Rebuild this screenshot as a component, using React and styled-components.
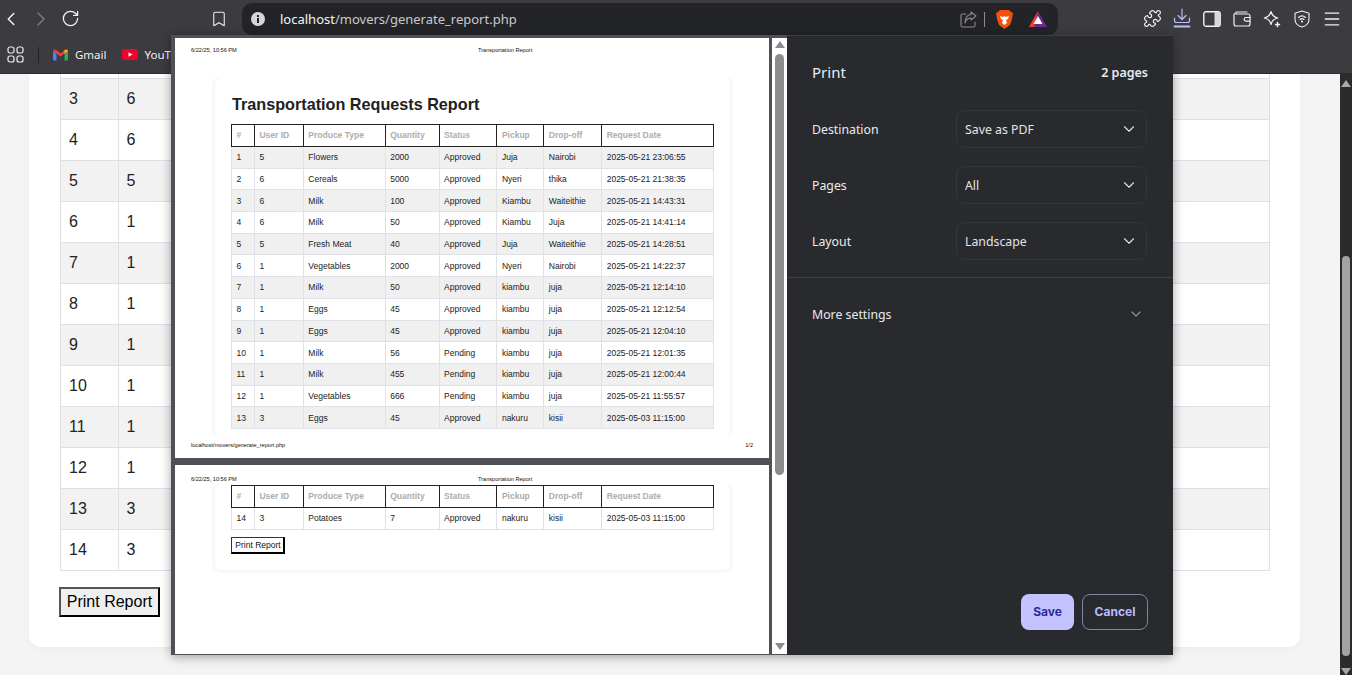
import styled, { createGlobalStyle, css } from 'styled-components';
import { Puzzle, RotateCw, Bookmark, ChevronDown, ChevronLeft, ChevronRight, Menu } from 'lucide-react';

const GlobalStyle = createGlobalStyle`
  html, body { margin: 0; padding: 0; height: 100%; overflow: hidden; }
  body { font-family: "Liberation Sans", Arial, sans-serif; background: #f4f4f4; }
  * { box-sizing: border-box; }
`;

const Screen = styled.div`
  position: relative;
  width: 1352px;
  height: 675px;
  display: flex;
  flex-direction: column;
  overflow: hidden;
`;

/* browser chrome */
const Toolbar = styled.div`
  height: 37px;
  background: #3b3b40;
  display: flex;
  align-items: center;
  padding: 0 8px 0 0;
  color: #fff;
`;

const NavGroup = styled.div`
  display: flex;
  align-items: center;
  width: 242px;
  flex: none;
`;

const NavIcon = styled.span`
  display: flex;
  justify-content: center;
  flex: none;
  width: ${p => p.$w || 30}px;
  margin-left: ${p => p.$ml || 0}px;
  color: ${p => p.$dim ? '#77777c' : '#f2f2f4'};
`;

const UrlBar = styled.div`
  width: 816px;
  height: 32px;
  margin-top: 1px;
  background: #232428;
  border-radius: 10px;
  display: flex;
  align-items: center;
  padding: 0 3px 0 9px;
  flex: none;
`;

const UrlText = styled.div`
  flex: 1;
  margin-left: 15px;
  font-family: "Noto Sans", sans-serif;
  font-size: 13px;
  color: #c9c9ce;
  span { color: #f4f4f6; }
`;

const UrlDivider = styled.span`
  width: 1px;
  height: 15px;
  background: #8c8c90;
  margin: 0 11px 0 7px;
`;

const ToolIcons = styled.div`
  flex: 1;
  display: flex;
  align-items: center;
  padding-left: 79px;
`;

const BookmarkBar = styled.div`
  height: 37px;
  background: #3b3b40;
  border-bottom: 1px solid #2c2c30;
  display: flex;
  align-items: center;
  padding: 0 0 1px 7px;
  color: #f0f0f2;
  font-family: "Noto Sans", sans-serif;
  font-size: 11.5px;
`;

const BarDivider = styled.span`
  width: 1px;
  height: 16px;
  background: #222226;
  margin: 0 14px 0 14px;
`;

const BookmarkItem = styled.span`
  display: flex;
  align-items: center;
  gap: 7px;
  margin-right: 15px;
  white-space: nowrap;
`;

/* page behind the dialog */
const Viewport = styled.div`
  flex: 1;
  min-height: 0;
  display: flex;
  background: #f4f4f4;
`;

const PageArea = styled.div`
  flex: 1;
  overflow: hidden;
`;

const Card = styled.div`
  width: 1271px;
  margin-left: 29px;
  padding: 0 30px 30px 31px;
  background: #fff;
  border-radius: 0 0 12px 12px;
  box-shadow: 0 2px 8px rgba(0, 0, 0, 0.03);
`;

const DataTable = styled.table`
  width: 100%;
  table-layout: fixed;
  border-collapse: collapse;
  color: #222;
  th, td { text-align: left; overflow: hidden; white-space: nowrap; }
  ${p => p.$mini ? css`
    font-size: 8.5px;
    th, td { padding: 0 4.5px; }
    th { height: 22px; padding-bottom: 1px; border: 1px solid #222; color: #adadad; font-weight: 700; }
    td { height: 21.7px; border: 1px solid #dfe1e6; }
    tbody tr:nth-child(odd) td { background: ${p.$plain ? '#fff' : '#f0f0f1'}; }
  ` : css`
    font-size: 16px;
    th, td { padding: 0 8px; border: 1px solid #dfdfe5; font-weight: 400; }
    th { height: 4px; border-top: 0; }
    td { height: 41px; }
    tbody tr:nth-child(odd) td { background: #f2f2f2; }
  `}
`;

const PrintButton = styled.button`
  display: block;
  font-family: "Liberation Sans", Arial, sans-serif;
  cursor: pointer;
  ${p => p.$mini ? css`
    font-size: 8.5px;
    height: 17px;
    width: 54px;
    padding: 0 0 0 1px;
    background: #fff;
    color: #111;
    border: 1px solid #333;
    border-right: 2px solid #000;
    border-bottom: 2px solid #000;
    margin-top: 7px;
  ` : css`
    font-size: 16px;
    height: 30px;
    width: 101px;
    padding: 0;
    background: #efefef;
    color: #000;
    border: 2px solid #555;
    border-right-color: #000;
    border-bottom-color: #000;
    margin-top: 16px;
    margin-left: -1px;
  `}
`;

const PageScroll = styled.div`
  width: 12px;
  flex: none;
  background: #2b2b2c;
  display: flex;
  flex-direction: column;
  align-items: center;
`;

const ScrollThumb = styled.div`
  width: ${p => p.$w}px;
  height: ${p => p.$h}px;
  margin-top: ${p => p.$top}px;
  background: ${p => p.$c};
  border-radius: ${p => p.$w / 2}px;
`;

const Arrow = styled.span`
  width: 0;
  height: 0;
  border-left: 5px solid transparent;
  border-right: 5px solid transparent;
  ${p => p.$down
    ? `border-top: 7px solid ${p.$c}; margin-top: auto; margin-bottom: ${p.$gap}px;`
    : `border-bottom: 7px solid ${p.$c}; margin-top: ${p.$gap}px;`}
`;

/* print dialog lies over the page */
const Dialog = styled.div`
  position: absolute;
  left: 171px;
  top: 35px;
  width: 1002px;
  height: 620px;
  display: flex;
  box-shadow: 0 2px 10px rgba(0, 0, 0, 0.35);
`;

const Preview = styled.div`
  width: 616px;
  flex: none;
  display: flex;
  background: #4f5156;
  padding: 3px 0 1px 4px;
`;

const Sheets = styled.div`
  width: 594px;
  flex: none;
  display: flex;
  flex-direction: column;
  gap: 7px;
`;

const Sheet = styled.div`
  height: ${p => p.$h}px;
  background: #fff;
  display: flex;
  flex-direction: column;
  overflow: hidden;
  flex: none;
`;

const SheetHead = styled.div`
  position: relative;
  z-index: 1;
  flex: none;
  height: ${p => p.$h}px;
  padding: ${p => p.$top}px 0 0 16px;
  background: #fff;
  display: grid;
  grid-template-columns: 287px auto;
  font-size: 5.6px;
  color: #111;
`;

const SheetFoot = styled.div`
  position: relative;
  z-index: 1;
  flex: none;
  height: 21px;
  background: #fff;
  display: flex;
  justify-content: space-between;
  padding: 5px 16px 0 16px;
  font-size: 5.6px;
  color: #111;
`;

const ReportCard = styled.div`
  flex: 1;
  min-height: 0;
  margin: 0 39px 0 40px;
  padding: ${p => p.$top}px 16px 0;
  background: #fff;
  border-radius: 6px;
  box-shadow: 0 0 6px rgba(0, 0, 0, 0.09);
  ${p => p.$h && `flex: none; height: ${p.$h}px;`}
`;

const ReportTitle = styled.h1`
  margin: 0 0 9px 1px;
  height: 21px;
  line-height: 21px;
  font-size: 16.2px;
  font-weight: 700;
  color: #222;
`;

const PreviewScroll = styled.div`
  width: 15px;
  margin-left: 3px;
  flex: none;
  background: #fff;
  display: flex;
  flex-direction: column;
  align-items: center;
`;

const Panel = styled.div`
  flex: 1;
  display: flex;
  flex-direction: column;
  background: #292a2d;
  border-top: 1px solid #3e3f43;
  font-family: "Noto Sans", sans-serif;
  color: #e9eaed;
  font-size: 12.3px;
`;

const PanelHead = styled.div`
  height: 74px;
  padding: 0 25px 3px;
  flex: none;
  display: flex;
  align-items: center;
  justify-content: space-between;
`;

const PanelTitle = styled.div`
  font-size: 15px;
`;

const PageCount = styled.div`
  font-size: 12.5px;
  font-weight: 600;
  margin-top: 2px;
`;

const SettingRows = styled.div`
  display: flex;
  flex-direction: column;
  gap: 18px;
  padding: 0 26px 17px 25px;
  border-bottom: 1px solid #3f4044;
`;

const SettingRow = styled.div`
  display: grid;
  grid-template-columns: 144px 1fr;
  align-items: center;
`;

const SelectBox = styled.div`
  height: 38px;
  border: 1px solid #343539;
  border-radius: 8px;
  display: flex;
  align-items: center;
  justify-content: space-between;
  padding: 0 8px 0 8px;
  color: #e3e5e8;
`;

const MoreRow = styled.div`
  height: 72px;
  padding: 0 29px 0 25px;
  display: flex;
  align-items: center;
  justify-content: space-between;
  color: #8e8f94;
  span { color: #e9eaed; }
`;

const PanelFoot = styled.div`
  margin-top: auto;
  padding: 0 25px 25px;
  display: flex;
  justify-content: flex-end;
  gap: 8px;
`;

const DialogButton = styled.button`
  height: 36px;
  border-radius: 8px;
  font-family: Inter, sans-serif;
  font-size: 12px;
  font-weight: 700;
  padding: 0 0 2px;
  width: ${p => p.$w}px;
  cursor: pointer;
  ${p => p.$primary ? css`
    background: #c2c3ff;
    color: #2f2a9c;
    border: 0;
  ` : css`
    background: transparent;
    color: #b9bcff;
    border: 1px solid #85859f;
  `}
`;

const rows = [
  [1, 5, 'Flowers', 2000, 'Approved', 'Juja', 'Nairobi', '2025-05-21 23:06:55'],
  [2, 6, 'Cereals', 5000, 'Approved', 'Nyeri', 'thika', '2025-05-21 21:38:35'],
  [3, 6, 'Milk', 100, 'Approved', 'Kiambu', 'Waiteithie', '2025-05-21 14:43:31'],
  [4, 6, 'Milk', 50, 'Approved', 'Kiambu', 'Juja', '2025-05-21 14:41:14'],
  [5, 5, 'Fresh Meat', 40, 'Approved', 'Juja', 'Waiteithie', '2025-05-21 14:28:51'],
  [6, 1, 'Vegetables', 2000, 'Approved', 'Nyeri', 'Nairobi', '2025-05-21 14:22:37'],
  [7, 1, 'Milk', 50, 'Approved', 'kiambu', 'juja', '2025-05-21 12:14:10'],
  [8, 1, 'Eggs', 45, 'Approved', 'kiambu', 'juja', '2025-05-21 12:12:54'],
  [9, 1, 'Eggs', 45, 'Approved', 'kiambu', 'juja', '2025-05-21 12:04:10'],
  [10, 1, 'Milk', 56, 'Pending', 'kiambu', 'juja', '2025-05-21 12:01:35'],
  [11, 1, 'Milk', 455, 'Pending', 'kiambu', 'juja', '2025-05-21 12:00:44'],
  [12, 1, 'Vegetables', 666, 'Pending', 'kiambu', 'juja', '2025-05-21 11:55:57'],
  [13, 3, 'Eggs', 45, 'Approved', 'nakuru', 'kisii', '2025-05-03 11:15:00'],
  [14, 3, 'Potatoes', 7, 'Approved', 'nakuru', 'kisii', '2025-05-03 11:15:00'],
];

const heads = ['#', 'User ID', 'Produce Type', 'Quantity', 'Status', 'Pickup', 'Drop-off', 'Request Date'];
const widths = [23, 49, 82, 54, 58, 47, 58, 112];

const Cols = () => (
  <colgroup>
    {widths.map((w, i) => <col key={i} style={{ width: `${(w / 483) * 100}%` }} />)}
  </colgroup>
);

const Report = ({ data, plain }) => (
  <DataTable $mini $plain={plain}>
    <Cols />
    <thead>
      <tr>{heads.map(h => <th key={h}>{h}</th>)}</tr>
    </thead>
    <tbody>
      {data.map(r => <tr key={r[0]}>{r.map((c, i) => <td key={i}>{c}</td>)}</tr>)}
    </tbody>
  </DataTable>
);

// page table scrolled to row 3, only the two first columns show beside the dialog
const PageTable = () => (
  <DataTable>
    <Cols />
    <thead>
      <tr>{heads.map(h => <th key={h} />)}</tr>
    </thead>
    <tbody>
      {rows.slice(2).map(r => (
        <tr key={r[0]}>{r.map((c, i) => <td key={i}>{i < 2 ? c : ''}</td>)}</tr>
      ))}
    </tbody>
  </DataTable>
);

const Stroke = ({ w = 18, h = 18, box = '0 0 18 18', children, sw = 1.4, color = 'currentColor' }) => (
  <svg width={w} height={h} viewBox={box} fill="none" stroke={color} strokeWidth={sw} strokeLinecap="round" strokeLinejoin="round">
    {children}
  </svg>
);

const GridIcon = () => (
  <Stroke w={17} h={17} box="0 0 17 17" sw={1.2}>
    <rect x="1" y="1" width="6" height="6" rx="2" />
    <rect x="10" y="1" width="6" height="6" rx="2" />
    <rect x="1" y="10" width="6" height="6" rx="2" />
    <rect x="10" y="10" width="6" height="6" rx="2" />
  </Stroke>
);

const InfoIcon = () => (
  <svg width="14" height="14" viewBox="0 0 14 14">
    <circle cx="7" cy="7" r="7" fill="#d6d6da" />
    <rect x="6" y="6" width="2" height="5" fill="#232428" />
    <rect x="6" y="3" width="2" height="2" fill="#232428" />
  </svg>
);

const ShareIcon = () => (
  <Stroke w={17} h={17} box="0 0 17 17" sw={1.1} color="#8c8c90">
    <path d="M6 3H2.500A1.500 1.500 0 0 0 1 4.500v10A1.500 1.500 0 0 0 2.500 16h11a1.500 1.500 0 0 0 1.500-1.500V11" />
    <path d="M11 1l5 4-5 4V7C8 7 6 8.500 5 12c0-5 2-8 6-8.500z" />
  </Stroke>
);

const BraveIcon = () => (
  <svg width="17" height="19" viewBox="0 0 17 19">
    <path d="M4 0h9l2 2 2 1-1 6-2 6-5.500 4L3 15 1 9 0 3l2-1z" fill="#f4500f" />
    <path d="M4 6l3 1 1.500-1L10 7l3-1-1 3-2 1 1 3-2.500 2L6 13l1-3-2-1z" fill="#fff" />
  </svg>
);

const BatIcon = () => (
  <svg width="18" height="16" viewBox="0 0 18 16">
    <path d="M9 0l9 16H0z" fill="#6a2a8c" />
    <path d="M9 0L0 16h5z" fill="#f0431f" />
    <path d="M9 5l4.500 8h-9z" fill="#fff" />
  </svg>
);

const DownloadIcon = () => (
  <Stroke w={18} h={22} box="0 0 18 22" sw={1.2} color="#bcbdf5">
    <path d="M9 1v10M5 7.500l4 4 4-4" />
    <path d="M1.500 10v2.500A2 2 0 0 0 3.500 14.500h11a2 2 0 0 0 2-2V10" />
    <path d="M1.500 18.500h15" strokeWidth="1.800" />
  </Stroke>
);

const SidebarIcon = () => (
  <svg width="18" height="16" viewBox="0 0 18 16">
    <rect x="0.800" y="0.800" width="16.400" height="14.400" rx="2" fill="none" stroke="#f2f2f4" strokeWidth="1.400" />
    <rect x="11.500" y="1" width="5.500" height="14" fill="#d8d8da" />
  </svg>
);

const WalletIcon = () => (
  <Stroke w={18} h={16} box="0 0 18 16" sw={1.2}>
    <path d="M3 1h11M1 4a2 2 0 0 1 2-2M1 4v9a2 2 0 0 0 2 2h12a2 2 0 0 0 2-2V5a2 2 0 0 0-2-2H3" />
    <path d="M17 6.500h-4a1.800 1.800 0 0 0 0 3.600h4" />
  </Stroke>
);

const SparkIcon = () => (
  <Stroke w={18} h={18} box="0 0 18 18" sw={1.2}>
    <path d="M8 1.500C8.800 5.200 10.800 7.200 14.800 8 10.800 8.800 8.800 10.800 8 14.500 7.200 10.800 5.200 8.800 1.200 8 5.200 7.200 7.200 5.200 8 1.500z" />
    <path d="M14.500 12.500v4M12.500 14.500h4" strokeWidth="1.500" />
  </Stroke>
);

const ShieldIcon = () => (
  <Stroke w={16} h={18} box="0 0 16 18" sw={1.100}>
    <path d="M8 1l7 2.200V9c0 4-3 7-7 8-4-1-7-4-7-8V3.200z" />
    <path d="M4.500 7.500c2-1.800 5-1.800 7 0M6 9.500c1.200-1 2.800-1 4 0" />
    <circle cx="8" cy="11.500" r=".5" />
  </Stroke>
);

const GmailIcon = () => (
  <svg width="15" height="12" viewBox="0 0 15 12">
    <path d="M0 1.500V10.500A1 1 0 0 0 1 11.500H3.500V5L0 2z" fill="#4285f4" />
    <path d="M15 1.500V10.500A1 1 0 0 1 14 11.500H11.500V5L15 2z" fill="#34a853" />
    <path d="M0 2L1 .5 3.500 1 7.500 4.500 11.500 1 14 .5 15 2 7.500 7.500z" fill="#ea4335" />
    <path d="M11.500 1L14 .5 15 2 11.500 5z" fill="#fbbc04" />
  </svg>
);

const YoutubeIcon = () => (
  <svg width="16" height="11" viewBox="0 0 16 11">
    <rect width="16" height="11" rx="3" fill="#f4002c" />
    <path d="M6.500 3.200v4.600L10.500 5.500z" fill="#fff" />
  </svg>
);

const settings = [
  ['Destination', 'Save as PDF'],
  ['Pages', 'All'],
  ['Layout', 'Landscape'],
];

const App = () => (
  <Screen>
    <GlobalStyle />
    <Toolbar>
      <NavGroup>
        <NavIcon $w={22}><ChevronLeft size={24} strokeWidth={1.6} /></NavIcon>
        <NavIcon $ml={4} $dim><ChevronRight size={24} strokeWidth={1.6} /></NavIcon>
        <NavIcon $w={28}><RotateCw size={19} strokeWidth={1.6} /></NavIcon>
        <NavIcon $ml={121} $w={28}><Bookmark size={18} strokeWidth={1.4} /></NavIcon>
      </NavGroup>
      <UrlBar>
        <InfoIcon />
        <UrlText><span>localhost</span>/movers/generate_report.php</UrlText>
        <ShareIcon />
        <UrlDivider />
        <BraveIcon />
        <NavIcon $ml={8} $w={34}><BatIcon /></NavIcon>
      </UrlBar>
      <ToolIcons>
        <NavIcon><Puzzle size={19} strokeWidth={1.5} /></NavIcon>
        <NavIcon><DownloadIcon /></NavIcon>
        <NavIcon><SidebarIcon /></NavIcon>
        <NavIcon><WalletIcon /></NavIcon>
        <NavIcon><SparkIcon /></NavIcon>
        <NavIcon><ShieldIcon /></NavIcon>
        <NavIcon><Menu size={20} strokeWidth={1.6} /></NavIcon>
      </ToolIcons>
    </Toolbar>
    <BookmarkBar>
      <GridIcon />
      <BarDivider />
      <BookmarkItem><GmailIcon />Gmail</BookmarkItem>
      <BookmarkItem><YoutubeIcon />YouTube</BookmarkItem>
    </BookmarkBar>

    <Viewport>
      <PageArea>
        <Card>
          <PageTable />
          <PrintButton>Print Report</PrintButton>
        </Card>
      </PageArea>
      <PageScroll>
        <Arrow $c="#a8a8a8" $gap={6} />
        <ScrollThumb $w={8} $h={400} $top={169} $c="#a3a3a3" />
        <Arrow $down $c="#a8a8a8" $gap={0} />
      </PageScroll>
    </Viewport>

    <Dialog>
      <Preview>
        <Sheets>
          <Sheet $h={420}>
            <SheetHead $h={40} $top={9}>
              <span>6/22/25, 10:56 PM</span>
              <span>Transportation Report</span>
            </SheetHead>
            <ReportCard $top={16}>
              <ReportTitle>Transportation Requests Report</ReportTitle>
              <Report data={rows.slice(0, 13)} />
            </ReportCard>
            <SheetFoot>
              <span>localhost/movers/generate_report.php</span>
              <span>1/2</span>
            </SheetFoot>
          </Sheet>
          <Sheet $h={189}>
            <SheetHead $h={20} $top={11}>
              <span>6/22/25, 10:56 PM</span>
              <span>Transportation Report</span>
            </SheetHead>
            <ReportCard $top={0} $h={85}>
              <Report data={rows.slice(13)} plain />
              <PrintButton $mini>Print Report</PrintButton>
            </ReportCard>
          </Sheet>
        </Sheets>
        <PreviewScroll>
          <Arrow $c="#8c8c8c" $gap={3} />
          <ScrollThumb $w={9} $h={421} $top={6} $c="#8c8c8c" />
          <Arrow $down $c="#8c8c8c" $gap={4} />
        </PreviewScroll>
      </Preview>
      <Panel>
        <PanelHead>
          <PanelTitle>Print</PanelTitle>
          <PageCount>2 pages</PageCount>
        </PanelHead>
        <SettingRows>
          {settings.map(([label, value]) => (
            <SettingRow key={label}>
              <span>{label}</span>
              <SelectBox>
                {value}
                <ChevronDown size={18} strokeWidth={1.5} />
              </SelectBox>
            </SettingRow>
          ))}
        </SettingRows>
        <MoreRow>
          <span>More settings</span>
          <ChevronDown size={16} strokeWidth={1.8} />
        </MoreRow>
        <PanelFoot>
          <DialogButton $primary $w={53}>Save</DialogButton>
          <DialogButton $w={66}>Cancel</DialogButton>
        </PanelFoot>
      </Panel>
    </Dialog>
  </Screen>
);

export default App;
